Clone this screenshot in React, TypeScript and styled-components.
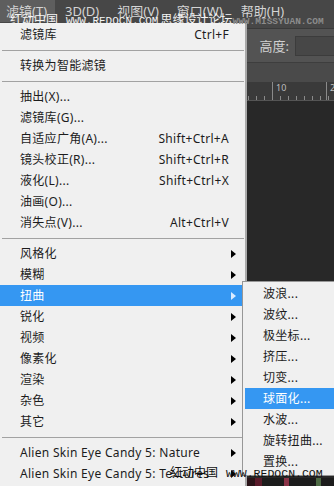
import React from 'react'
import styled, { createGlobalStyle } from 'styled-components'

const GlobalStyle = createGlobalStyle`
  html, body {
    margin: 0;
    padding: 0;
    background: #282828;
    overflow: hidden;
  }
  body {
    font-family: "Noto Sans", "Noto Sans CJK SC", sans-serif;
  }
`

type Entry =
  | { kind: 'item'; label: string; shortcut?: string; sub?: boolean; active?: boolean }
  | { kind: 'sep' }

const MAIN: Entry[] = [
  { kind: 'item', label: '滤镜库', shortcut: 'Ctrl+F' },
  { kind: 'sep' },
  { kind: 'item', label: '转换为智能滤镜' },
  { kind: 'sep' },
  { kind: 'item', label: '抽出(X)...' },
  { kind: 'item', label: '滤镜库(G)...' },
  { kind: 'item', label: '自适应广角(A)...', shortcut: 'Shift+Ctrl+A' },
  { kind: 'item', label: '镜头校正(R)...', shortcut: 'Shift+Ctrl+R' },
  { kind: 'item', label: '液化(L)...', shortcut: 'Shift+Ctrl+X' },
  { kind: 'item', label: '油画(O)...' },
  { kind: 'item', label: '消失点(V)...', shortcut: 'Alt+Ctrl+V' },
  { kind: 'sep' },
  { kind: 'item', label: '风格化', sub: true },
  { kind: 'item', label: '模糊', sub: true },
  { kind: 'item', label: '扭曲', sub: true, active: true },
  { kind: 'item', label: '锐化', sub: true },
  { kind: 'item', label: '视频', sub: true },
  { kind: 'item', label: '像素化', sub: true },
  { kind: 'item', label: '渲染', sub: true },
  { kind: 'item', label: '杂色', sub: true },
  { kind: 'item', label: '其它', sub: true },
  { kind: 'sep' },
  { kind: 'item', label: 'Alien Skin Eye Candy 5: Nature', sub: true },
  { kind: 'item', label: 'Alien Skin Eye Candy 5: Textures', sub: true },
]

const DISTORT = ['波浪...', '波纹...', '极坐标...', '挤压...', '切变...', '球面化...', '水波...', '旋转扭曲...', '置换...']

const Page = styled.div`
  position: relative;
  width: 334px;
  height: 486px;
  overflow: hidden;
  background: #282828;
  display: flex;
  flex-direction: column;
`

const MenuBar = styled.div`
  height: 28px;
  flex: none;
  background: #474747;
  border-bottom: 1px solid #3a3a3a;
  display: flex;
  align-items: flex-start;
  color: #d4d4d4;
  font-size: 13px;
  line-height: 22px;
`

const BarItem = styled.div<{ $open?: boolean }>`
  height: 22px;
  padding: 0 8px 0 6px;
  margin-right: 4px;
  background: ${(p) => (p.$open ? '#5e5e5e' : 'transparent')};
  white-space: nowrap;
`

const OptionsBar = styled.div`
  height: 33px;
  flex: none;
  background: #535353;
  display: flex;
  align-items: center;
  justify-content: flex-end;
  gap: 6px;
  color: #d0d0d0;
  font-size: 13px;
`

const FieldLabel = styled.span`
  line-height: 18px;
`

const FieldBox = styled.div`
  width: 38px;
  height: 18px;
  background: #474747;
  border: 1px solid #3c3c3c;
  border-right: none;
`

const TabStrip = styled.div`
  height: 19px;
  flex: none;
  background: #4a4a4a;
  border-top: 1px solid #3e3e3e;
`

const Ruler = styled.div`
  height: 18px;
  flex: none;
  background: #3a3a3a;
  border-bottom: 1px solid #555;
  display: flex;
  align-items: flex-start;
  padding-left: 272px;
  color: #bdbdbd;
  font-size: 9px;
  line-height: 12px;
  overflow: hidden;
  background-image: repeating-linear-gradient(
    to right,
    #8a8a8a 0 1px,
    transparent 1px 8px
  );
  background-size: 100% 4px;
  background-position: 0 100%;
  background-repeat: no-repeat;
`

const RulerMark = styled.span`
  flex: none;
  border-left: 1px solid #8a8a8a;
  padding-left: 3px;
  height: 18px;
  width: 50px;
`

const Canvas = styled.div`
  flex: 1;
  background: #282828;
  display: flex;
  align-items: flex-end;
  justify-content: flex-end;
`

const PhotoStrip = styled.div`
  width: 90px;
  height: 8px;
  background: linear-gradient(to right, #2a1418 0 12%, #5a1b2a 12% 20%, #1c1c1c 20% 45%, #8a3347 45% 50%, #1c1c1c 50% 80%, #4d6a44 80% 86%, #1c1c1c 86%);
`

const DropMenu = styled.div`
  position: absolute;
  left: 0;
  top: 23px;
  width: 245px;
  height: 480px;
  background: #f0f0f0;
  border-right: 2px solid #a9a9a9;
  padding-top: 1px;
  display: flex;
  flex-direction: column;
  font-size: 12px;
  letter-spacing: 0.3px;
  color: #1c1c1c;
`

const Row = styled.div<{ $active?: boolean }>`
  height: 21px;
  flex: none;
  display: flex;
  align-items: center;
  padding: 0 16px 0 20px;
  background: ${(p) => (p.$active ? '#3597f2' : 'transparent')};
  color: ${(p) => (p.$active ? '#ffffff' : '#1c1c1c')};
  white-space: nowrap;
  line-height: 21px;
`

const Label = styled.span`
  flex: 1;
`

const Shortcut = styled.span`
  text-align: right;
`

const Arrow = styled.span<{ $active?: boolean }>`
  width: 0;
  height: 0;
  margin-right: -7px;
  border-top: 4px solid transparent;
  border-bottom: 4px solid transparent;
  border-left: 5px solid ${(p) => (p.$active ? '#dcecff' : '#000')};
`

const Sep = styled.div`
  height: 10px;
  flex: none;
  display: flex;
  align-items: center;
  padding: 0 1px 0 2px;
  &::after {
    content: '';
    flex: 1;
    height: 1px;
    background: #a2a2a2;
  }
`

const SubMenu = styled.div`
  position: absolute;
  left: 242px;
  top: 281px;
  width: 110px;
  background: #f0f0f0;
  border: 1px solid #979797;
  padding: 1px 0 3px 2px;
  display: flex;
  flex-direction: column;
  font-size: 12px;
  letter-spacing: 0.3px;
`

const SubRow = styled(Row)`
  padding-left: 18px;
`

const Watermark = styled.div<{ $dark?: boolean; $top: number; $left: number }>`
  position: absolute;
  top: ${(p) => p.$top}px;
  left: ${(p) => p.$left}px;
  display: flex;
  align-items: baseline;
  white-space: nowrap;
  color: ${(p) => (p.$dark ? '#111' : '#f4f4f4')};
  font-family: "Noto Sans CJK SC", sans-serif;
  line-height: 16px;
`

const MarkName = styled.span<{ $gap?: number }>`
  font-size: 12px;
  margin-left: ${(p) => p.$gap ?? 0}px;
`

const MarkUrl = styled.span<{ $dim?: boolean; $size: number; $gap: number }>`
  font-family: "Liberation Mono", "DejaVu Sans Mono", monospace;
  font-size: ${(p) => p.$size}px;
  margin-left: ${(p) => p.$gap}px;
  color: ${(p) => (p.$dim ? '#8c8c8c' : 'inherit')};
  font-weight: ${(p) => (p.$dim ? 700 : 400)};
`

export default function App() {
  return (
    <>
      <GlobalStyle />
      <Page>
        <MenuBar>
          <BarItem $open>滤镜(T)</BarItem>
          <BarItem>3D(D)</BarItem>
          <BarItem>视图(V)</BarItem>
          <BarItem>窗口(W)</BarItem>
          <BarItem>帮助(H)</BarItem>
        </MenuBar>
        <OptionsBar>
          <FieldLabel>高度:</FieldLabel>
          <FieldBox />
        </OptionsBar>
        <TabStrip />
        <Ruler>
          <RulerMark>10</RulerMark>
          <RulerMark>2</RulerMark>
        </Ruler>
        <Canvas>
          <PhotoStrip />
        </Canvas>

        <DropMenu>
          {MAIN.map((e, i) =>
            e.kind === 'sep' ? (
              <Sep key={i} />
            ) : (
              <Row key={i} $active={e.active}>
                <Label>{e.label}</Label>
                {e.shortcut && <Shortcut>{e.shortcut}</Shortcut>}
                {e.sub && <Arrow $active={e.active} />}
              </Row>
            )
          )}
        </DropMenu>

        <SubMenu>
          {DISTORT.map((s) => (
            <SubRow key={s} $active={s === '球面化...'}>
              <Label>{s}</Label>
            </SubRow>
          ))}
        </SubMenu>

        <Watermark $top={11} $left={10}>
          <MarkName>红动中国</MarkName>
          <MarkUrl $size={11} $gap={8}>WWW.REDOCN.COM</MarkUrl>
          <MarkName $gap={2}>思缘设计论坛</MarkName>
          <MarkUrl $dim $size={9.5} $gap={0}>WWW.MISSYUAN.COM</MarkUrl>
        </Watermark>
        <Watermark $dark $top={464} $left={170}>
          <MarkName>红动中国</MarkName>
          <MarkUrl $size={11.5} $gap={8}>WWW.REDOCN.COM</MarkUrl>
        </Watermark>
      </Page>
    </>
  )
}
